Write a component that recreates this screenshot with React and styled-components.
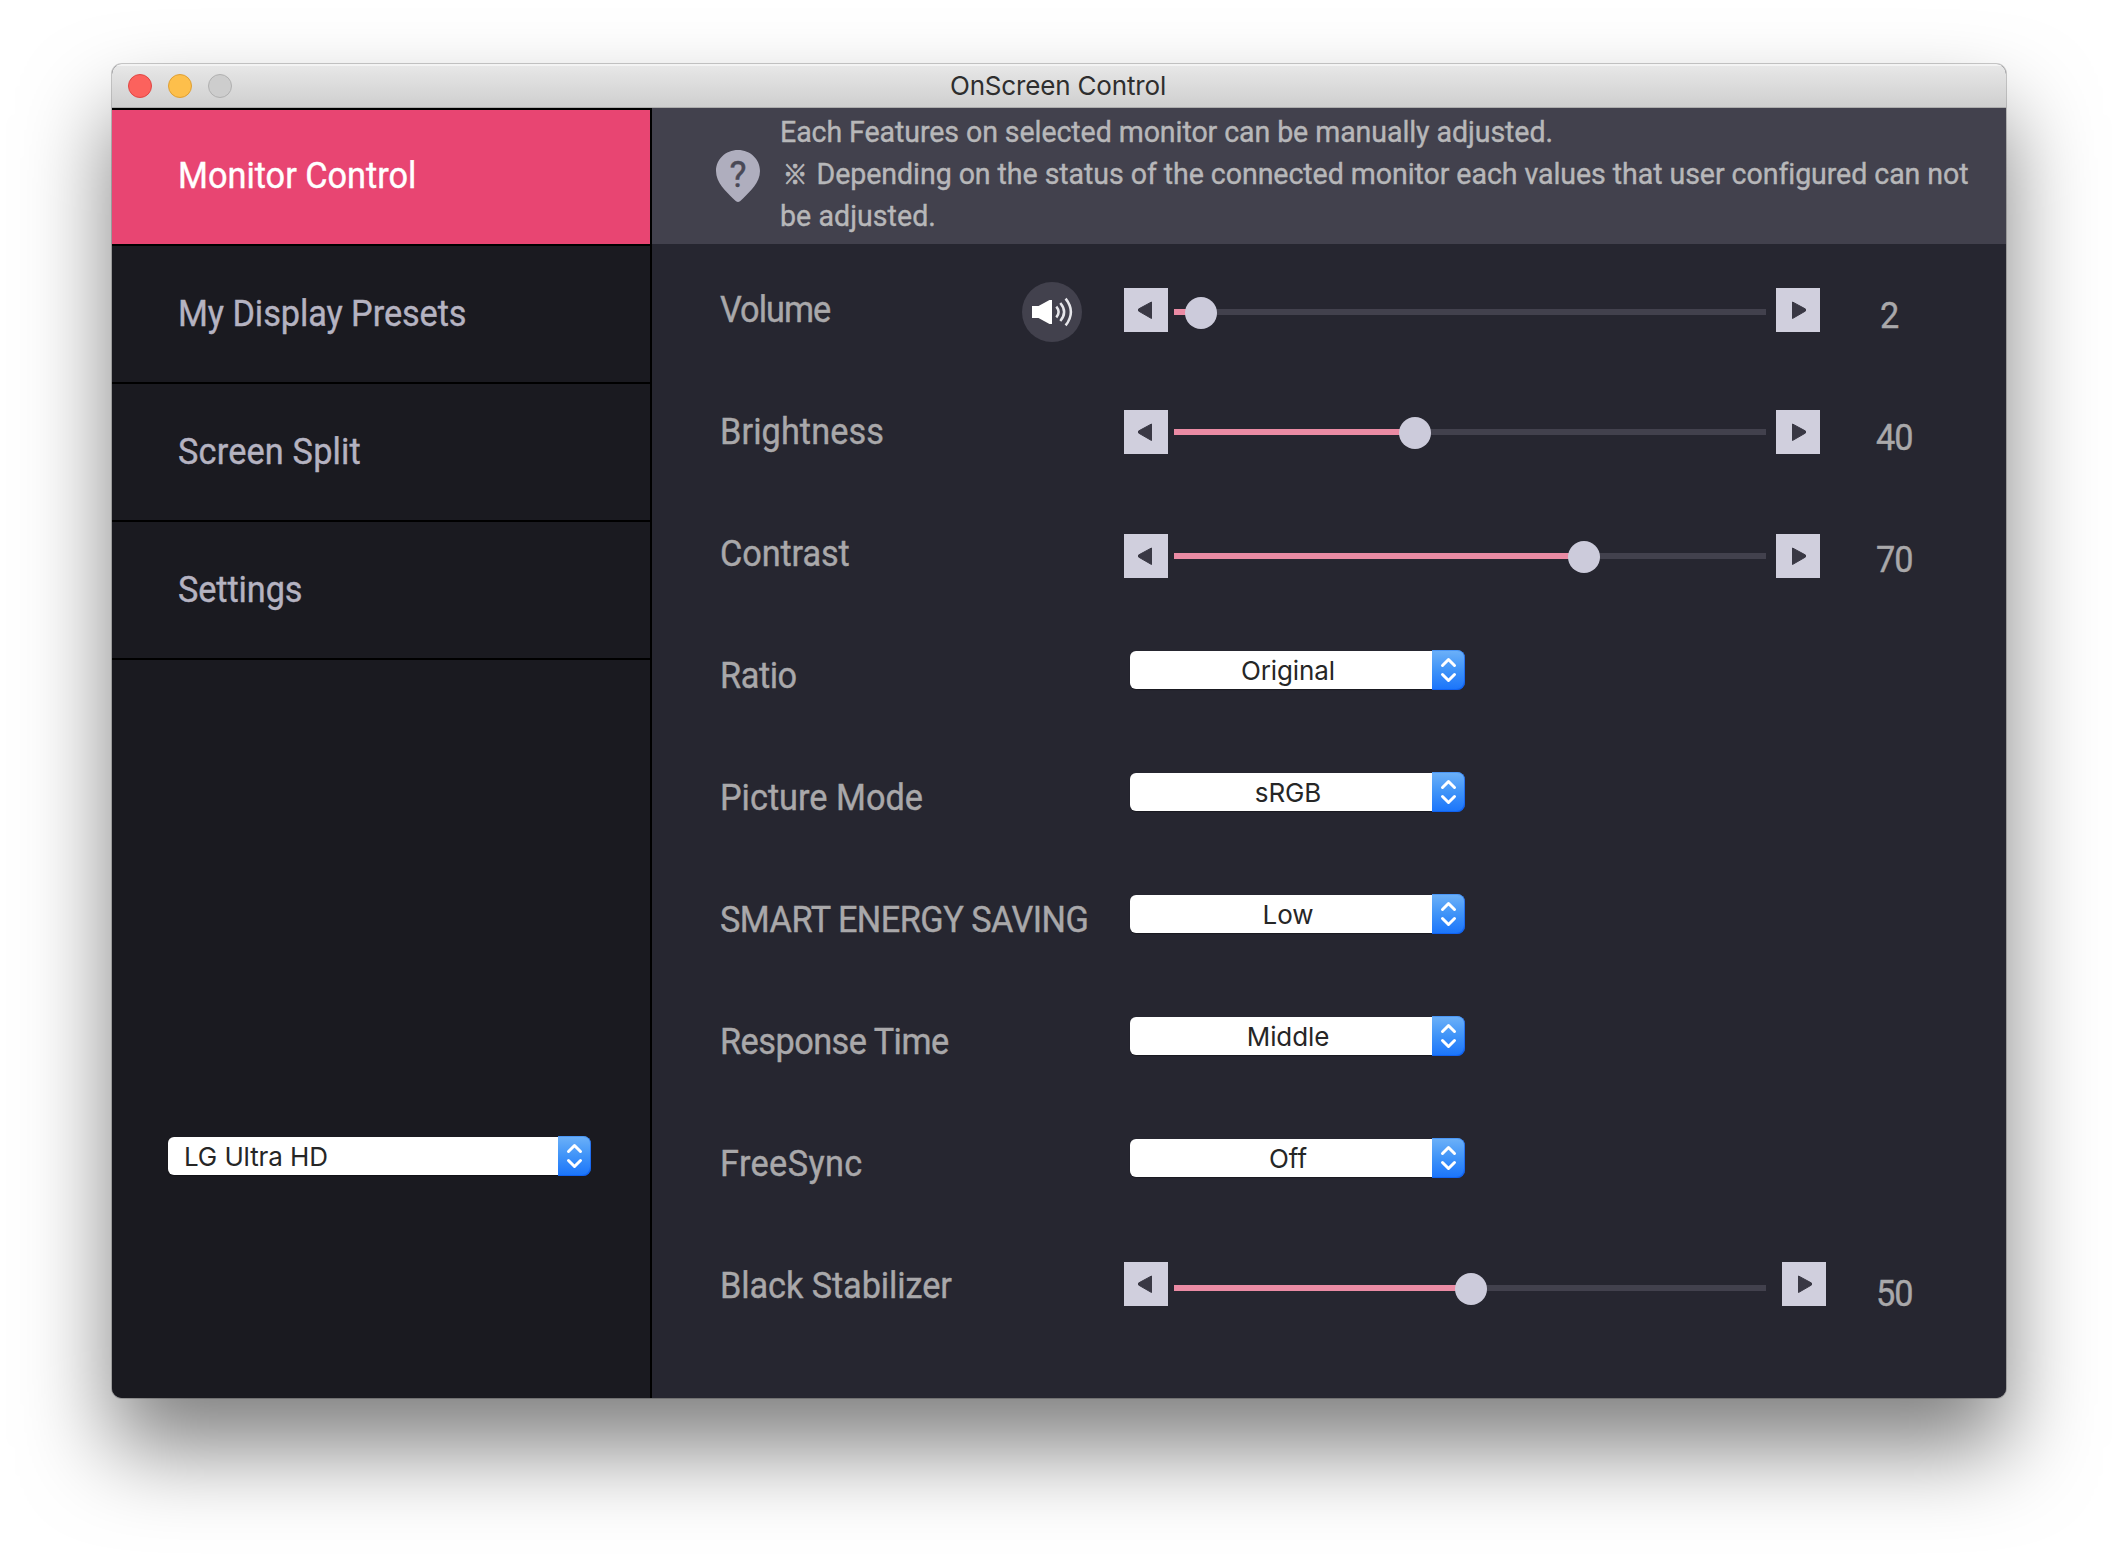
import React from "react";
import styled, { createGlobalStyle } from "styled-components";

const color = {
  pink: "#e84572",
  sidebar: "#1a1a20",
  panel: "#262630",
  header: "#42414d",
  control: "#d0cfdd",
  knob: "#cccbdb",
  glyph: "#393844",
  fill: "#ea8ba4",
  label: "#a9a8aa",
  nav: "#b5b3c1",
  note: "#b7b7b9",
};

const uiFont = `Roboto, "Noto Sans CJK JP", sans-serif`;
const systemFont = `Inter, "Liberation Sans", sans-serif`;

const GlobalStyle = createGlobalStyle`
  *, *::before, *::after { box-sizing: border-box; }
  html, body { margin: 0; background: #fff; }
  body { width: 2118px; height: 1558px; overflow: hidden; }
`;

const Desktop = styled.div`
  width: 2118px;
  height: 1558px;
  padding: 64px 112px 0;
  overflow: hidden;
  background: #fff;
`;

const Window = styled.div`
  display: flex;
  flex-direction: column;
  width: 1894px;
  height: 1334px;
  border-radius: 10px;
  overflow: hidden;
  background: ${color.panel};
  box-shadow: 0 0 0 1px rgba(0, 0, 0, 0.2), 0 50px 88px rgba(0, 0, 0, 0.5);
`;

const TitleBar = styled.header`
  display: grid;
  grid-template-columns: 160px 1fr 162px;
  align-items: center;
  height: 44px;
  flex: none;
  background: linear-gradient(#e8e8e8, #cfcfcf);
  border-bottom: 1px solid #adadad;
  box-shadow: inset 0 2px 0 #f3f3f3;
`;

const Lights = styled.div`
  display: flex;
  gap: 16px;
  padding-left: 16px;
`;

const Light = styled.span`
  width: 24px;
  height: 24px;
  border-radius: 50%;
  background: ${(p) => p.$fill};
  border: 1px solid ${(p) => p.$edge};
`;

const Title = styled.h1`
  margin: 0;
  padding-top: 1px;
  text-align: center;
  font: 400 26px/42px ${systemFont};
  letter-spacing: -0.17px;
  color: #2e2e2e;
`;

const Body = styled.div`
  display: grid;
  grid-template-columns: 540px 1fr;
  flex: 1;
`;

const Sidebar = styled.aside`
  display: flex;
  flex-direction: column;
  background: ${color.sidebar};
  border-right: 2px solid #000;
`;

const Nav = styled.nav`
  display: flex;
  flex-direction: column;
  border-top: 2px solid #000;
`;

const NavItem = styled.div`
  display: flex;
  align-items: center;
  height: ${(p) => (p.$active ? 136 : 138)}px;
  padding: 0 66px ${(p) => (p.$active ? 3 : 0)}px;
  border-bottom: 2px solid #000;
  background: ${(p) => (p.$active ? color.pink : "transparent")};
  color: ${(p) => (p.$active ? "#fff" : color.nav)};
`;

const Condensed = styled.span`
  display: inline-block;
  font: 400 ${(p) => p.$size || 36}px/42px ${uiFont};
  letter-spacing: ${(p) => p.$tracking || 0}px;
  white-space: pre;
  -webkit-text-stroke: 0.4px currentColor;
  transform: scaleX(0.952);
  transform-origin: left center;
`;

const DeviceSlot = styled.div`
  padding: 476px 0 0 56px;
`;

const Main = styled.main`
  display: flex;
  flex-direction: column;
  background: ${color.panel};
`;

const Notice = styled.section`
  display: flex;
  align-items: flex-start;
  height: 136px;
  padding: 3px 0 0 64px;
  background: ${color.header};
  color: ${color.note};
`;

const HelpIcon = styled.svg`
  width: 44px;
  height: 52px;
  margin: 39px 20px 0 0;
  flex: none;
`;

const NoticeText = styled.div`
  display: flex;
  flex-direction: column;
`;

const NoticeLine = styled(Condensed)`
  display: flex;
  height: 42px;
`;

const RefMark = styled.span`
  width: 31px;
  padding-left: 3px;
  font-family: "Noto Sans CJK JP", sans-serif;
  font-size: 26px;
  line-height: 40px;
  -webkit-text-stroke: 0.8px currentColor;
`;

const Controls = styled.section`
  display: flex;
  flex-direction: column;
  padding: 5px 0 0 68px;
`;

const Row = styled.div`
  display: grid;
  grid-template-columns: 302px 102px 752px 1fr;
  align-items: center;
  height: 122px;
  color: ${color.label};
`;

const Mute = styled.div`
  grid-column: 2;
  width: 60px;
  height: 60px;
  margin-top: 4px;
  border-radius: 50%;
  background: ${color.header};

  svg { display: block; }
`;

const SliderBox = styled.div`
  grid-column: 3;
  display: flex;
  align-items: center;
`;

const StepButton = styled.div`
  display: flex;
  align-items: center;
  justify-content: center;
  width: 44px;
  height: 44px;
  flex: none;
  margin-top: ${(p) => p.$shift * 2}px;
  background: ${color.control};
`;

const Track = styled.div`
  display: flex;
  align-items: center;
  width: 592px;
  height: 6px;
  margin: ${(p) => p.$shift * 2}px ${(p) => p.$gap}px 0 6px;
  background: ${color.header};
`;

const Fill = styled.div`
  height: 6px;
  flex: none;
  background: ${color.fill};
`;

const Knob = styled.div`
  width: 32px;
  height: 32px;
  flex: none;
  margin: 2px 0 0 -12px;
  border-radius: 50%;
  background: ${color.knob};
`;

const Value = styled.div`
  grid-column: 4;
  padding: ${(p) => p.$drop * 2}px 0 0 ${(p) => p.$inset}px;
`;

const Select = styled.div`
  grid-column: 3;
  display: flex;
  align-items: center;
  width: ${(p) => p.$width}px;
  margin: ${(p) => (p.$raised ? "-12px 0 0 6px" : "0")};
`;

const SelectText = styled.div`
  flex: 1;
  height: 38px;
  padding-left: ${(p) => (p.$align === "left" ? 16 : 14)}px;
  border-radius: 6px 0 0 6px;
  background: #fff;
  color: #262626;
  font: 400 26px/39px ${systemFont};
  letter-spacing: -0.1px;
  text-align: ${(p) => p.$align};
  box-shadow: 0 1px 1px rgba(0, 0, 0, 0.35);
`;

const SelectArrows = styled.div`
  width: 33px;
  height: 40px;
  border-radius: 0 8px 8px 0;
  background: linear-gradient(#6db1f8, #3f93f8 50%, #1a74fb);
  box-shadow: inset -1px -1px 0 rgba(10, 85, 235, 0.6), inset 0 1px 0 rgba(60, 140, 245, 0.7);

  svg { display: block; }
`;

function Arrow({ right }) {
  return (
    <svg width="44" height="44" viewBox="0 0 44 44">
      <path
        d={right ? "M16.500 14v16.500L29.500 23v-2z" : "M27.500 14v16.500L14.500 23v-2z"}
        fill={color.glyph}
        stroke={color.glyph}
        strokeWidth="1"
        strokeLinejoin="round"
      />
    </svg>
  );
}

function Popup({ text, width, align = "center", raised }) {
  return (
    <Select $width={width} $raised={raised}>
      <SelectText $align={align}>{text}</SelectText>
      <SelectArrows>
        <svg width="33" height="40" viewBox="0 0 33 40" fill="none" stroke="#fff" strokeWidth="3" strokeLinecap="round" strokeLinejoin="round">
          <path d="M10.500 15.500L16.500 9.500l6 6M10.500 24.500l6 6 6-6" />
        </svg>
      </SelectArrows>
    </Select>
  );
}

function Slider({ value, buttonShift = 0, trackShift = 0, gap = 10 }) {
  return (
    <SliderBox>
      <StepButton $shift={buttonShift}><Arrow /></StepButton>
      <Track $shift={trackShift} $gap={gap}>
        <Fill style={{ width: Math.floor(value * 5.63) + 12 }} />
        <Knob />
      </Track>
      <StepButton $shift={buttonShift}><Arrow right /></StepButton>
    </SliderBox>
  );
}

function Speaker() {
  return (
    <svg width="60" height="60" viewBox="0 0 60 60">
      <path d="M10 24h6.500l11-6H30v24h-2.500l-11-6H10z" fill="#fff" />
      <g fill="none" stroke="#e6e6ea" strokeWidth="2.500">
        <path d="M34.300 24.600q4.600 5.400 0 10.800" />
        <path d="M38.300 21q7.600 9 0 18" />
        <path d="M43.600 16.600q10.600 13.400 0 26.800" />
      </g>
    </svg>
  );
}

const navItems = [
  { text: "Monitor Control", active: true },
  { text: "My Display Presets", tracking: -0.07 },
  { text: "Screen Split", tracking: 0.19 },
  { text: "Settings", tracking: -0.09 },
];

const settings = [
  { label: "Volume", tracking: -1, mute: true, value: 2, trackShift: 2, inset: 4 },
  { label: "Brightness", tracking: 0.09, value: 40 },
  { label: "Contrast", tracking: -0.1, value: 70, buttonShift: 2, trackShift: 2 },
  { label: "Ratio", tracking: -0.45, option: "Original" },
  { label: "Picture Mode", option: "sRGB" },
  { label: "SMART ENERGY SAVING", tracking: -0.54, option: "Low" },
  { label: "Response Time", tracking: -0.55, option: "Middle" },
  { label: "FreeSync", tracking: 0.4, option: "Off" },
  { label: "Black Stabilizer", tracking: -0.08, value: 50, buttonShift: -2, trackShift: 2, gap: 16, drop: 8 },
];

export default function App() {
  return (
    <Desktop>
      <GlobalStyle />
      <Window>
        <TitleBar>
          <Lights>
            <Light $fill="#fc625d" $edge="#df4744" />
            <Light $fill="#fdbf4b" $edge="#de9f34" />
            <Light $fill="#cdcdcd" $edge="#b0b0b0" />
          </Lights>
          <Title>OnScreen Control</Title>
        </TitleBar>
        <Body>
          <Sidebar>
            <Nav>
              {navItems.map((n) => (
                <NavItem key={n.text} $active={n.active}>
                  <Condensed $tracking={n.tracking}>{n.text}</Condensed>
                </NavItem>
              ))}
            </Nav>
            <DeviceSlot>
              <Popup text="LG Ultra HD" width={423} align="left" />
            </DeviceSlot>
          </Sidebar>
          <Main>
            <Notice>
              <HelpIcon viewBox="0 0 44 52">
                <path d="M22 0C34.500 0 44 9.500 44 21c0 11.500-10 20.500-17 27.500Q23.500 52 22 52t-5-3.500C10 41.500 0 32.500 0 21 0 9.500 9.500 0 22 0z" fill="#afaebe" />
                <text x="22" y="36.500" textAnchor="middle" fontFamily="Roboto, sans-serif" fontSize="36" fontWeight="400" fill="#4a4956" stroke="#4a4956" strokeWidth="0.4">?</text>
              </HelpIcon>
              <NoticeText>
                <NoticeLine $size={30} $tracking={-0.09}>Each Features on selected monitor can be manually adjusted.</NoticeLine>
                <NoticeLine $size={30} $tracking={-0.07}>
                  <RefMark>※</RefMark>
                  <span> Depending on the status of the connected monitor each values that user configured can not</span>
                </NoticeLine>
                <NoticeLine $size={30} $tracking={0.05}>be adjusted.</NoticeLine>
              </NoticeText>
            </Notice>
            <Controls>
              {settings.map((s) => (
                <Row key={s.label}>
                  <Condensed $tracking={s.tracking}>{s.label}</Condensed>
                  {s.mute && <Mute><Speaker /></Mute>}
                  {s.option ? (
                    <Popup text={s.option} width={335} raised />
                  ) : (
                    <>
                      <Slider value={s.value} buttonShift={s.buttonShift} trackShift={s.trackShift} gap={s.gap} />
                      <Value $drop={s.drop || 6} $inset={s.inset || 0}>
                        <Condensed $tracking={-1}>{s.value}</Condensed>
                      </Value>
                    </>
                  )}
                </Row>
              ))}
            </Controls>
          </Main>
        </Body>
      </Window>
    </Desktop>
  );
}
